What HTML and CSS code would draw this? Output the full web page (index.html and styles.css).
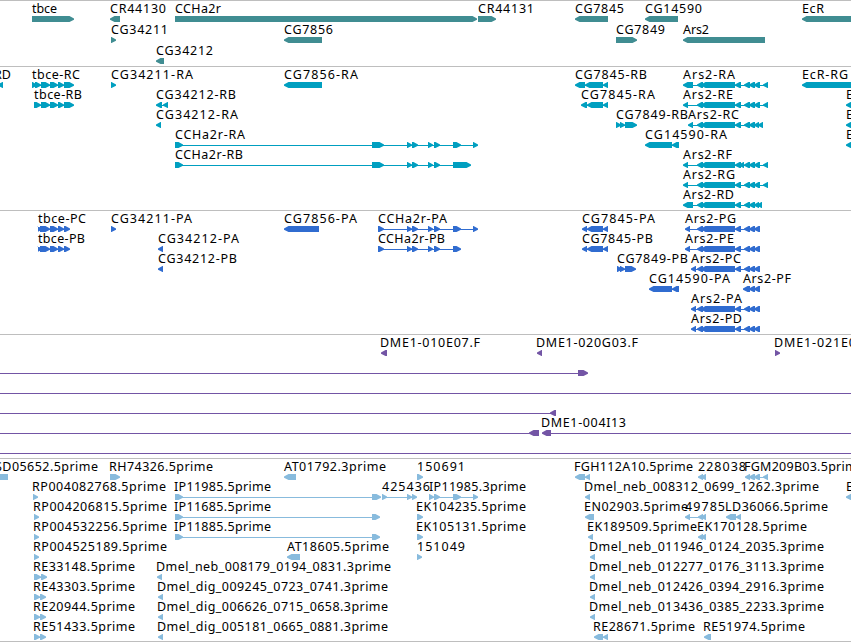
FILE: index.html
```html
<!DOCTYPE html>
<html lang="en">
<head>
  <meta charset="UTF-8">
  <title>Genome browser</title>
  <meta name="viewport" content="width=device-width, initial-scale=1.0">
  <link rel="stylesheet" href="styles.css">
</head>
<body>
  <main class="browser">
    <section class="track gene" id="gene"></section>
    <section class="track transcript" id="transcript"></section>
    <section class="track protein" id="protein"></section>
    <section class="track bac" id="bac"></section>
    <section class="track est" id="est"></section>
  </main>
  <script src="script.js"></script>
</body>
</html>
```
FILE: styles.css
```css
body {
  margin: 0;
  background: #fff;
  overflow: hidden;
}
.browser {
  display: flex;
  flex-direction: column;
  width: 851px;
  border-bottom: 1px solid #bebebe;
}
.track {
  border-top: 1px solid #bebebe;
}
.track svg {
  display: block;
  overflow: hidden;
}
.label {
  font-family: "Noto Sans", "DejaVu Sans", sans-serif;
  font-size: 12.5px;
  fill: #000;
}
.gene {
  color: #408d92;
}
.transcript {
  color: #009fc0;
}
.protein {
  color: #306cd0;
}
.bac {
  color: #7355a5;
}
.est {
  color: #88bbdd;
}
.exon,
.intron {
  fill: currentColor;
}
```
FILE: script.js
```js
const NS = "http://www.w3.org/2000/svg";
const WIDTH = 851;

// exons shared by several transcripts
const arsCore = [[697, 703], [701, 735], [735, 741], [744, 750], [749, 755], [754, 760]];
const arsShort = [[697, 703], [701, 735], [735, 741], [744, 750], [749, 755], [754, 759]];
const ccha = [[407, 412], [412, 418], [428, 433], [434, 440]];
const end = [763, 768];

// feature: [row, label, label start, label end, strand, blocks]
const tracks = {
  gene: { height: 65, pitch: 21, features: [
    [0, "tbce", 32, 57, ">", [[32, 74]]],
    [0, "CR44130", 110, 166, "<", [[110, 120]]],
    [0, "CCHa2r", 175, 221, ">", [[175, 477]]],
    [0, "CR44131", 478, 534, ">", [[478, 496]]],
    [0, "CG7845", 575, 624, "<", [[575, 608]]],
    [0, "CG14590", 645, 702, "<", [[645, 678]]],
    [0, "EcR", 802, 824, "<", [[802, 860]]],
    [1, "CG34211", 111, 168, ">", [[111, 116]]],
    [1, "CG7856", 284, 333, "<", [[284, 322]]],
    [1, "CG7849", 616, 665, ">", [[616, 637]]],
    [1, "Ars2", 683, 709, "<", [[683, 765]]],
    [2, "CG34212", 156, 213, "<", [[156, 164]]]
  ] },
  transcript: { height: 143, pitch: 20, features: [
    [0, "RD", -6, 11, "<", [[-2, 3]]],
    [0, "tbce-RC", 32, 80, ">", [[32, 37], [35, 41], [41, 50], [50, 58], [58, 64], [64, 74]]],
    [0, "CG34211-RA", 111, 193, ">", [[111, 116]]],
    [0, "CG7856-RA", 284, 358, "<", [[284, 322]]],
    [0, "CG7845-RB", 575, 647, "<", [[575, 585], [585, 603], [603, 608]]],
    [0, "Ars2-RA", 683, 735, "<", [[683, 693], ...arsCore, end]],
    [0, "EcR-RG", 802, 848, "<", [[802, 860]]],
    [1, "tbce-RB", 34, 82, ">", [[34, 41], [41, 50], [50, 58], [58, 64], [64, 74]]],
    [1, "CG34212-RB", 156, 236, "<", [[156, 162], [163, 168]]],
    [1, "CG7845-RA", 581, 655, "<", [[581, 587], [587, 603], [603, 608]]],
    [1, "Ars2-RE", 683, 733, "<", [[683, 688], ...arsCore, end]],
    [1, "E", 846, 854, "<", [[846, 860]]],
    [2, "CG34212-RA", 156, 238, "<", [[156, 161]]],
    [2, "CG7849-RB", 616, 688, ">", [[616, 621], [620, 625], [625, 637]]],
    [2, "Ars2-RC", 688, 739, "<", [[688, 693], ...arsShort, [758, 763]]],
    [2, "E", 846, 854, "<", [[846, 860]]],
    [3, "CCHa2r-RA", 175, 245, ">", [[175, 183], [372, 384], ...ccha, [453, 461], [473, 478]]],
    [3, "CG14590-RA", 645, 727, "<", [[645, 672], [672, 679]]],
    [3, "E", 846, 854, "<", [[846, 860]]],
    [4, "CCHa2r-RB", 175, 243, ">", [[175, 183], [372, 384], ...ccha, [453, 471]]],
    [4, "Ars2-RF", 683, 732, "<", [[683, 688], ...arsCore, [739, 744], end]],
    [5, "Ars2-RG", 683, 735, "<", [[683, 688], ...arsCore, end]],
    [6, "Ars2-RD", 683, 734, "<", [[683, 693], ...arsShort, [757, 762]]]
  ] },
  protein: { height: 123, pitch: 20, features: [
    [0, "tbce-PC", 38, 86, ">", [[38, 42], [40, 50], [50, 58], [58, 64], [64, 70]]],
    [0, "CG34211-PA", 111, 192, ">", [[111, 116]]],
    [0, "CG7856-PA", 284, 357, "<", [[284, 319]]],
    [0, "CCHa2r-PA", 378, 447, ">", [[378, 384], ...ccha, [453, 461], [473, 478]]],
    [0, "CG7845-PA", 582, 655, "<", [[582, 587], [587, 603], [603, 608]]],
    [0, "Ars2-PG", 685, 736, "<", [[685, 690], ...arsCore]],
    [1, "tbce-PB", 38, 85, ">", [[38, 42], [40, 50], [50, 58], [58, 64], [64, 70]]],
    [1, "CG34212-PA", 158, 239, "<", [[158, 163]]],
    [1, "CCHa2r-PB", 378, 445, ">", [[378, 384], ...ccha, [453, 461]]],
    [1, "CG7845-PB", 582, 653, "<", [[582, 587], [587, 603], [603, 608]]],
    [1, "Ars2-PE", 685, 734, "<", [[685, 690], ...arsCore]],
    [2, "CG34212-PB", 158, 237, "<", [[158, 163]]],
    [2, "CG7849-PB", 617, 688, ">", [[617, 622], [620, 625], [625, 636]]],
    [2, "Ars2-PC", 691, 741, "<", [[691, 696], ...arsCore]],
    [3, "CG14590-PA", 649, 730, "<", [[649, 672], [672, 679]]],
    [3, "Ars2-PF", 743, 791, "<", [[743, 750], [749, 755], [754, 760]]],
    [4, "Ars2-PA", 691, 742, "<", [[691, 696], ...arsCore]],
    [5, "Ars2-PD", 691, 742, "<", [[691, 696], ...arsCore]]
  ] },
  bac: { height: 123, pitch: 20, features: [
    [0, "DME1-010E07.F", 380, 480, "<", [[381, 387]]],
    [0, "DME1-020G03.F", 536, 638, "<", [[537, 542]]],
    [0, "DME1-021E0", 774, 856, ">", [[775, 780]]],
    [1, "", 0, 0, ">", [[-20, -10], [578, 588]]],
    [2, "", 0, 0, ">", [[-20, -10], [870, 880]]],
    [3, "", 0, 0, "<", [[-20, -10], [550, 556]]],
    [4, "", 0, 0, "<", [[-20, -10], [529, 539]]],
    [4, "DME1-004I13", 541, 626, "<", [[542, 551], [870, 880]]],
    [5, "", 0, 0, ">", [[-20, -10], [870, 880]]]
  ] },
  est: { height: 182, pitch: 20, features: [
    [0, "SD05652.5prime", -5, 98, "<", [[-6, 8]]],
    [0, "RH74326.5prime", 109, 213, ">", [[110, 120]]],
    [0, "AT01792.3prime", 284, 386, "<", [[284, 296]]],
    [0, "150691", 417, 465, ">", [[417, 423]]],
    [0, "FGH112A10.5prime", 574, 693, "<", [[575, 585], [585, 590]]],
    [0, "228038", 698, 746, "<", [[698, 703], [701, 706]]],
    [0, "FGM209B03.5prime", 744, 864, "<", [[745, 750], [749, 755], [754, 760], end]],
    [1, "RP004082768.5prime", 32, 166, ">", [[33, 38]]],
    [1, "IP11985.5prime", 174, 271, ">", [[175, 183], [372, 381]]],
    [1, "425436", 382, 430, ">", [[382, 387], [407, 412], [412, 417]]],
    [1, "IP11985.3prime", 429, 526, ">", [[429, 434], [434, 440], [453, 461], [473, 478]]],
    [1, "Dmel_neb_008312_0699_1262.3prime", 584, 819, "<", [[585, 590]]],
    [1, "E", 846, 854, "<", [[846, 860]]],
    [2, "RP004206815.5prime", 33, 167, ">", [[34, 39]]],
    [2, "IP11685.5prime", 174, 271, ">", [[175, 183], [372, 380]]],
    [2, "EK104235.5prime", 416, 526, ">", [[417, 423]]],
    [2, "EN02903.5prime", 584, 688, "<", [[585, 594]]],
    [2, "49785", 685, 725, "<", [[685, 690], [698, 703], [701, 706]]],
    [2, "LD36066.5prime", 725, 828, "<", [[726, 736], [736, 741]]],
    [3, "RP004532256.5prime", 33, 167, ">", [[34, 39]]],
    [3, "IP11885.5prime", 174, 271, ">", [[175, 183], [372, 380]]],
    [3, "EK105131.5prime", 416, 526, ">", [[417, 423]]],
    [3, "EK189509.5prime", 587, 697, "<", [[588, 593]]],
    [3, "EK170128.5prime", 697, 807, "<", [[698, 703], [701, 706]]],
    [4, "RP004525189.5prime", 33, 167, ">", [[34, 39]]],
    [4, "AT18605.5prime", 287, 389, "<", [[287, 300]]],
    [4, "151049", 417, 465, ">", [[417, 422]]],
    [4, "Dmel_neb_011946_0124_2035.3prime", 589, 824, "<", [[590, 595]]],
    [5, "RE33148.5prime", 33, 135, ">", [[34, 41], [41, 47]]],
    [5, "Dmel_neb_008179_0194_0831.3prime", 156, 391, "<", [[157, 162]]],
    [5, "Dmel_neb_012277_0176_3113.3prime", 589, 824, "<", [[590, 595]]],
    [6, "RE43303.5prime", 33, 135, ">", [[34, 40], [40, 46]]],
    [6, "Dmel_dig_009245_0723_0741.3prime", 157, 388, "<", [[158, 163]]],
    [6, "Dmel_neb_012426_0394_2916.3prime", 589, 824, "<", [[590, 595]]],
    [7, "RE20944.5prime", 33, 135, ">", [[34, 40], [40, 46]]],
    [7, "Dmel_dig_006626_0715_0658.3prime", 157, 388, "<", [[158, 163]]],
    [7, "Dmel_neb_013436_0385_2233.3prime", 589, 824, "<", [[590, 595]]],
    [8, "RE51433.5prime", 33, 135, ">", [[34, 40], [40, 46]]],
    [8, "Dmel_dig_005181_0665_0881.3prime", 157, 388, "<", [[158, 163]]],
    [8, "RE28671.5prime", 593, 695, "<", [[594, 603], [603, 608]]],
    [8, "RE51974.5prime", 703, 805, "<", [[704, 711]]]
  ] }
};

function add(parent, name, attrs) {
  const el = document.createElementNS(NS, name);
  for (const key in attrs) el.setAttribute(key, attrs[key]);
  parent.appendChild(el);
  return el;
}

// block with a blunt 5px arrow head on the strand side
function arrow(a, b, y, strand) {
  if (strand === ">") {
    return `${a},${y} ${b - 4.5},${y} ${b},${y + 2.4} ${b},${y + 3.8} ${b - 4.5},${y + 6} ${a},${y + 6}`;
  }
  return `${b},${y} ${a + 4.5},${y} ${a},${y + 2.4} ${a},${y + 3.8} ${a + 4.5},${y + 6} ${b},${y + 6}`;
}

for (const id in tracks) {
  const track = tracks[id];
  const svg = add(document.getElementById(id), "svg", { width: WIDTH, height: track.height });

  for (const [row, label, from, to, strand, blocks] of track.features) {
    const top = row * track.pitch;
    if (blocks.length > 1) {
      const x1 = blocks[0][0] + 2;
      const x2 = blocks[blocks.length - 1][1] - 2;
      add(svg, "rect", { class: "intron", x: x1, y: top + 18, width: x2 - x1, height: 1 });
    }
    for (const [a, b] of blocks) {
      add(svg, "polygon", { class: "exon", points: arrow(a, b, top + 15, strand) });
    }
    if (label) {
      const text = add(svg, "text", { class: "label", x: from, y: top + 12, textLength: to - from });
      text.textContent = label;
    }
  }
}
```
